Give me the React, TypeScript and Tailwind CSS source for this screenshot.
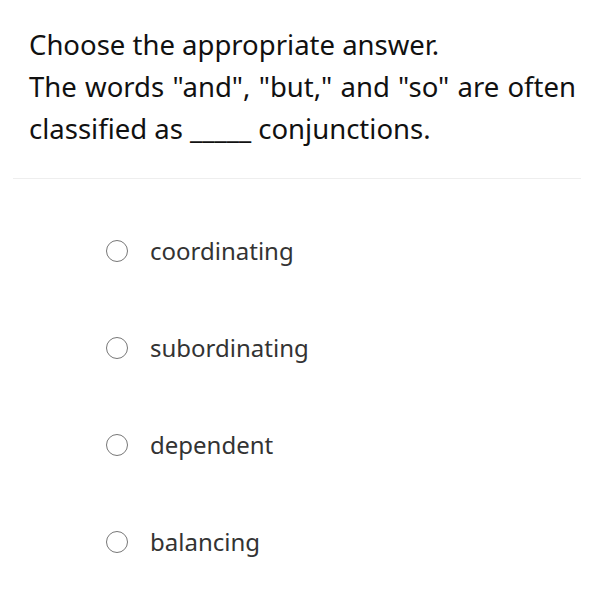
const options = ["coordinating", "subordinating", "dependent", "balancing"];

export default function App() {
  return (
    <div className="w-[594px] h-[594px] bg-white font-['Noto_Sans',sans-serif]">
      <div className="pl-[29px] pr-[18px] pt-[24px] pb-[28px] text-[27.5px] leading-[42px] text-[#111]">
        <p>Choose the appropriate answer.</p>
        <p className="text-justify">
          The words "and", "but," and "so" are often classified as _____ conjunctions.
        </p>
      </div>
      <div className="mx-[13px] h-px bg-[#eeeeee]" />
      <div className="flex flex-col gap-[73px] pl-[106px] pt-[60px]">
        {options.map((o) => (
          <label key={o} className="flex items-center gap-[22px] h-[24px]">
            <span className="w-[22px] h-[22px] rounded-full border-[1.5px] border-[#777]" />
            <span className="text-[24px] text-[#333]">{o}</span>
          </label>
        ))}
      </div>
    </div>
  );
}
